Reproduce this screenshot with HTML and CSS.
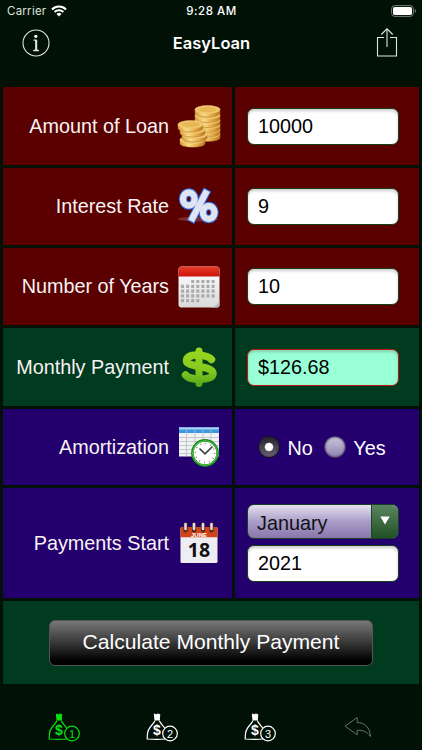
FILE: index.html
```
<!DOCTYPE html>
<html lang="en">
<head>
	<meta charset="UTF-8">
	<title>EasyLoan</title>
	<link rel="stylesheet" href="styles.css">
</head>
<body>
	<div class="status">
		<div class="carrier">
			<span>Carrier</span>
			<svg width="16" height="12" viewBox="0 0 16 12" fill="none" stroke="#fff" stroke-width="2.1">
				<path d="M1 4.400a10 10 0 0 1 14 0M3.600 7.100a6.300 6.300 0 0 1 8.800 0"/>
				<path d="M8 11.500L5.500 9a3.600 3.600 0 0 1 5 0z" fill="#fff" stroke="none"/>
			</svg>
		</div>
		<div class="time">9:28 AM</div>
		<svg class="battery" width="26" height="12" viewBox="0 0 26 12">
			<rect x="0.600" y="0.600" width="21.800" height="10.800" rx="3.200" fill="none" stroke="#768078" stroke-width="1"/>
			<rect x="2" y="2" width="19" height="8" rx="1.800" fill="#fff"/>
			<path d="M23.700 4a2.200 2.200 0 0 1 0 4z" fill="#768078"/>
		</svg>
	</div>
	<div class="navbar">
		<svg width="28" height="28" viewBox="0 0 28 28" fill="none" stroke="#dfe6e0">
			<circle cx="14" cy="14" r="13" stroke-width="1.100"/>
			<circle cx="13.800" cy="7.300" r="1.600" fill="#fff" stroke="none"/>
			<path d="M11.500 11.200h2.700v10.300M11.300 21.500h5.600" stroke-width="1.300"/>
			<path d="M14.200 11v10.500" stroke-width="2"/>
		</svg>
		<h1>EasyLoan</h1>
		<svg width="22" height="30" viewBox="0 0 22 30" fill="none" stroke="#dfe6e0" stroke-width="1.100">
			<path d="M8 9.500H1.500v18.500h19V9.500H14M11 19V1M5.300 6.500L11 0.800L16.700 6.500"/>
		</svg>
	</div>

	<form class="loan">
		<div class="cell label red">
			<label for="amount">Amount of Loan</label>
			<svg width="44" height="44" viewBox="0 0 44 44">
				<defs>
					<linearGradient id="gold">
						<stop offset="0" stop-color="#d99a3a"/>
						<stop offset="0.350" stop-color="#fbdc88"/>
						<stop offset="0.700" stop-color="#e3a645"/>
						<stop offset="1" stop-color="#b87722"/>
					</linearGradient>
					<g id="coin">
						<path d="M0 4v3.500c0 5.200 25 5.200 25 0V4z" fill="url(#gold)" stroke="#b57a2b" stroke-width="0.500"/>
						<ellipse cx="12.500" cy="4" rx="12.500" ry="3.900" fill="#efc468" stroke="#f5d283" stroke-width="0.500"/>
						<ellipse cx="12.500" cy="4" rx="9" ry="2.500" fill="#e6b657"/>
					</g>
				</defs>
				<use href="#coin" x="18" y="26"/>
				<use href="#coin" x="18" y="21.500"/>
				<use href="#coin" x="18" y="17"/>
				<use href="#coin" x="18" y="12"/>
				<use href="#coin" x="18" y="7"/>
				<use href="#coin" x="18" y="1.500"/>
				<use href="#coin" x="3" y="31.800"/>
				<use href="#coin" x="5" y="26.500"/>
				<use href="#coin" x="3" y="21.500"/>
				<use href="#coin" x="1" y="16.500"/>
			</svg>
		</div>
		<div class="cell red"><input class="field" id="amount" type="text" value="10000"></div>

		<div class="cell label red">
			<label for="rate">Interest Rate</label>
			<svg width="44" height="44" viewBox="0 0 44 44" fill="none">
				<ellipse cx="21" cy="34" rx="20" ry="2.400" fill="#943434" opacity="0.700"/>
				<g stroke="#2f6be0" stroke-width="8.400">
					<ellipse cx="11.800" cy="14" rx="5.800" ry="6.500"/>
					<ellipse cx="31.700" cy="27.500" rx="5.800" ry="6.500"/>
					<path d="M30.500 4.500L13.500 37"/>
				</g>
				<g stroke="#dfe4f2" stroke-width="6.400">
					<ellipse cx="11.800" cy="14" rx="5.800" ry="6.500"/>
					<ellipse cx="31.700" cy="27.500" rx="5.800" ry="6.500"/>
					<path d="M30 5.500L14 36"/>
				</g>
			</svg>
		</div>
		<div class="cell red"><input class="field" id="rate" type="text" value="9"></div>

		<div class="cell label red">
			<label for="years">Number of Years</label>
			<svg width="44" height="44" viewBox="0 0 44 44">
				<defs>
					<linearGradient id="paper" x2="0" y2="1">
						<stop offset="0" stop-color="#fff"/>
						<stop offset="1" stop-color="#d9d9d9"/>
					</linearGradient>
					<linearGradient id="header" x2="0" y2="1">
						<stop offset="0" stop-color="#e93b2a"/>
						<stop offset="1" stop-color="#cb1408"/>
					</linearGradient>
				</defs>
				<rect x="1.500" y="1.500" width="41" height="41" rx="3" fill="url(#paper)"/>
				<path d="M1.500 11.500V4.500a3 3 0 0 1 3-3h35a3 3 0 0 1 3 3v7z" fill="url(#header)"/>
				<path d="M14.200 16.500h25" stroke="#aaa" stroke-width="3.200" stroke-dasharray="3 2.100"/>
				<path d="M4 21.300h35M4 26.100h35M4 30.900h35M4 35.700h18.500" stroke="#aaa" stroke-width="3.200" stroke-dasharray="3 2.100"/>
				<path d="M34 42.500c5-1 7.500-4 8.500-8v6a2 2 0 0 1-2 2z" fill="#b9b9b9"/>
			</svg>
		</div>
		<div class="cell red"><input class="field" id="years" type="text" value="10"></div>

		<div class="cell label green">
			<label for="payment">Monthly Payment</label>
			<svg width="44" height="44" viewBox="0 0 44 44">
				<defs>
					<linearGradient id="lime" gradientUnits="userSpaceOnUse" x1="0" y1="2" x2="0" y2="42">
						<stop offset="0" stop-color="#9ed81e"/>
						<stop offset="0.600" stop-color="#84c81f"/>
						<stop offset="1" stop-color="#4fa51c"/>
					</linearGradient>
				</defs>
				<g fill="none" stroke="url(#lime)" stroke-linecap="round">
					<path d="M22 6v32.500" stroke-width="7"/>
					<path d="M34.500 14.500C31 9.500 10.500 7.500 9.500 15.500C9 22.500 35.500 20 36 28.500C36 36.500 12.500 35.500 8.500 30" stroke-width="7.500"/>
				</g>
			</svg>
		</div>
		<div class="cell green"><input class="field result" id="payment" type="text" value="$126.68" readonly></div>

		<div class="cell label blue">
			<span>Amortization</span>
			<svg width="44" height="44" viewBox="0 0 44 44">
				<path d="M2 2.500h40v29H2z" fill="#f1f2f4"/>
				<path d="M2 2.500h40V8H2z" fill="#3d97e2"/>
				<path d="M2 2.500h40v2H2z" fill="#a5d5f7"/>
				<path d="M2 12.500h40M2 16.500h40M2 20.500h40M2 24.500h40M2 28.500h40M9.500 2.500v29M18 2.500v29M26 2.500v29M34 2.500v29" stroke="#b9bdc5" stroke-width="0.800"/>
				<circle cx="28" cy="28" r="12.600" fill="#fff" stroke="#168a1b" stroke-width="2.600"/>
				<circle cx="28" cy="28" r="12.300" fill="none" stroke="#5cc64d" stroke-width="1"/>
				<circle cx="28" cy="28" r="9.600" fill="none" stroke="#777" stroke-width="1.500" stroke-dasharray="0.900 4.127"/>
				<path d="M22.500 23.500L28 28.800L35.500 21.500" fill="none" stroke="#3b4248" stroke-width="1.700"/>
			</svg>
		</div>
		<div class="cell blue radios">
			<input type="radio" name="amortization" id="no" checked>
			<label for="no">No</label>
			<input type="radio" name="amortization" id="yes">
			<label for="yes">Yes</label>
		</div>

		<div class="cell label blue">
			<span>Payments Start</span>
			<svg width="44" height="44" viewBox="0 0 44 44">
				<rect x="3.500" y="6" width="37" height="36" rx="1.500" fill="#eeedf1"/>
				<path d="M3.500 16.300V7.500q0-1.500 1.500-1.500h34q1.500 0 1.500 1.500v8.800z" fill="#cf4419"/>
				<path d="M8.500 3.500v6M17 3.500v6M26 3.500v6M34.500 3.500v6" stroke="#592415" stroke-width="4.200" stroke-linecap="round"/>
				<path d="M8.500 3v5M17 3v5M26 3v5M34.500 3v5" stroke="#d9d9df" stroke-width="2.600" stroke-linecap="round"/>
				<text class="month" x="22" y="15.500">JUNE</text>
				<text class="day" x="22" y="35.800">18</text>
			</svg>
		</div>
		<div class="cell blue start">
			<div class="select">
				<span>January</span>
				<div class="arrow"><svg width="10" height="9" viewBox="0 0 10 9"><path d="M0.300 0.500h9.400L5 8.500z" fill="#fff"/></svg></div>
			</div>
			<input class="field" type="text" value="2021">
		</div>

		<div class="cell green submit">
			<button type="button">Calculate Monthly Payment</button>
		</div>
	</form>

	<div class="tabbar">
		<svg class="tab active" viewBox="0 0 32 30">
			<g id="bag">
				<path d="M8.300 2l2 .7 1.500-.7 2 .5-.5 5.500H9z" fill="currentColor" stroke="currentColor"/>
				<path d="M9 8.500C7 13.500 1.700 15 1.400 22.500L1.200 27q10 .700 18.500 0M13.300 8.500c1 3 3.500 5 5.300 7.500" fill="none" stroke="currentColor" stroke-width="1.200"/>
				<circle cx="24" cy="21.500" r="7.300" fill="none" stroke="currentColor" stroke-width="1.200"/>
			</g>
			<text class="dollar" x="11" y="22.500">$</text>
			<text class="num" x="24" y="25.500">1</text>
		</svg>
		<svg class="tab" viewBox="0 0 32 30">
			<use href="#bag"/>
			<text class="dollar" x="11" y="22.500">$</text>
			<text class="num" x="24" y="25.500">2</text>
		</svg>
		<svg class="tab" viewBox="0 0 32 30">
			<use href="#bag"/>
			<text class="dollar" x="11" y="22.500">$</text>
			<text class="num" x="24" y="25.500">3</text>
		</svg>
		<svg class="tab back" viewBox="0 0 32 30">
			<path d="M3 14.200L15.200 5.500v5C22.500 10.500 28 15.500 28.500 24.500C25 19.500 21 18 15.200 18.300v4.500z" fill="none" stroke="currentColor" stroke-width="1"/>
		</svg>
	</div>
</body>
</html>
```
FILE: styles.css
```
* {
	box-sizing: border-box;
}
body {
	margin: 0;
	height: 750px;
	overflow: hidden;
	background: #021106;
	color: #fff;
	font-family: "Liberation Sans", Arial, sans-serif;
}
svg {
	display: block;
	flex: none;
}
.status {
	display: grid;
	grid-template-columns: 1fr auto 1fr;
	align-items: center;
	height: 22px;
	padding: 0 5px 0 6px;
	font-family: Inter, sans-serif;
	font-size: 11.500px;
}
.carrier {
	display: flex;
	align-items: center;
	gap: 5px;
	padding-left: 1px;
}
.carrier span {
	color: #dbe2dc;
	letter-spacing: 0.250px;
}
.time {
	font-weight: 500;
	letter-spacing: 0.500px;
}
.battery {
	justify-self: end;
}
.navbar {
	display: flex;
	align-items: center;
	justify-content: space-between;
	height: 42px;
	padding: 0 24px 0 22px;
}
.navbar h1 {
	margin: 0 3px 0 0;
	font: 600 16.500px Inter, sans-serif;
}
.loan {
	display: grid;
	grid-template-columns: 229px 184px;
	grid-template-rows: 78px 77px 77px 78px 76px 110px 83px;
	gap: 3px;
	margin: 23px 3px 0;
}
.cell {
	display: flex;
	align-items: center;
	padding-left: 12px;
}
.label {
	justify-content: flex-end;
	gap: 8px;
	padding: 0 11px 0 0;
	font-size: 19.800px;
	color: #f8f2f2;
}
.red {
	background: #5a0000;
}
.green {
	background: #003b20;
}
.blue {
	background: #24006f;
}
.field {
	display: block;
	width: 152px;
	height: 37px;
	margin: 0;
	padding: 0 10px;
	border: 1px solid #183f1c;
	border-radius: 7px;
	background: #fff;
	box-shadow: inset 0 2px 3px #ccc;
	font-family: inherit;
	font-size: 19.800px;
	color: #000;
	outline: none;
}
.result {
	border-color: #b51b12;
	background: #99ffd6;
	box-shadow: inset 0 2px 3px #80cfb0;
}
.radios {
	padding-left: 23px;
	font-size: 19.800px;
}
.radios input {
	appearance: none;
	width: 22px;
	height: 22px;
	margin: 0;
	border: 1px solid #4a3d68;
	border-radius: 50%;
	background: linear-gradient(#c9c3da, #9184b5);
	box-shadow: inset 0 0 2px #333;
}
.radios input:checked {
	border-color: #17131f;
	background: radial-gradient(circle, #fff 0 3.500px, #aaa 4.200px, transparent 4.700px), linear-gradient(#24222c, #686274);
}
.radios label {
	margin: 3px 11px 0 7.500px;
}
.start {
	flex-direction: column;
	align-items: flex-start;
	justify-content: center;
	gap: 6px;
}
.select {
	display: flex;
	width: 152px;
	height: 35px;
	border: 1px solid #163c2a;
	border-radius: 7px;
	overflow: hidden;
	background: linear-gradient(#e6e1f0, #a99dc8 50%, #8877ad);
	font-size: 19.800px;
	line-height: 36px;
	color: #111;
}
.select span {
	flex: 1;
	padding-left: 9px;
}
.arrow {
	display: flex;
	align-items: center;
	justify-content: center;
	width: 27px;
	padding-bottom: 2px;
	border-left: 1px solid #204526;
	background: linear-gradient(#5a8560, #225024);
}
.month {
	font: 700 6px/1 "Liberation Sans", sans-serif;
	fill: #fff;
	text-anchor: middle;
}
.day {
	font: 700 19.500px/1 "Open Sans", sans-serif;
	fill: #111;
	text-anchor: middle;
}
.submit {
	grid-column: 1 / 3;
	justify-content: center;
	padding: 0;
}
button {
	width: 324px;
	height: 46px;
	padding: 0 0 1px;
	border: 1px solid #555;
	border-radius: 6px;
	background: linear-gradient(#777, #3d3d3d 45%, #000 90%);
	font-family: inherit;
	font-size: 21.100px;
	color: #fff;
}
.tabbar {
	display: flex;
	justify-content: space-between;
	padding: 28px 48px 0 48px;
}
.tab {
	width: 32px;
	height: 30px;
	color: #fff;
}
.active {
	color: #0be00f;
}
.back {
	color: #68706a;
}
.dollar {
	font: 700 14px "Liberation Sans", sans-serif;
	fill: currentColor;
	text-anchor: middle;
}
.num {
	font: 11px "Liberation Sans", sans-serif;
	fill: currentColor;
	text-anchor: middle;
}
```
